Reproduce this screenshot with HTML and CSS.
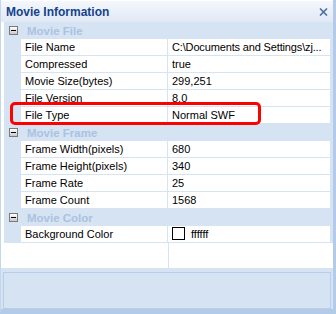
FILE: index.html
```html
<!DOCTYPE html>
<html lang="en">
  <head>
    <meta charset="UTF-8" />
    <title>Movie Information</title>
    <link rel="stylesheet" href="styles.css">
  </head>
  <body>
    <div class="window">
      <div class="titlebar">
        <span class="title">Movie Information</span>
        <svg class="close" width="9" height="8" viewBox="0 0 9 8">
          <path d="M1 0.5 L8 7.5 M8 0.5 L1 7.5" stroke="#4d6f9f" stroke-width="1.6" fill="none" />
        </svg>
      </div>

      <div class="grid">
        <div class="group"><span class="toggle"></span>Movie File</div>
        <div class="row"><div class="name">File Name</div><div class="value path" title="C:\Documents and Settings\zjh\My Documents\movie.swf">C:\Documents and Settings\zj...</div></div>
        <div class="row"><div class="name">Compressed</div><div class="value">true</div></div>
        <div class="row"><div class="name">Movie Size(bytes)</div><div class="value">299,251</div></div>
        <div class="row"><div class="name">File Version</div><div class="value">8.0</div></div>
        <div class="row"><div class="name">File Type</div><div class="value">Normal SWF</div></div>

        <div class="group"><span class="toggle"></span>Movie Frame</div>
        <div class="row"><div class="name">Frame Width(pixels)</div><div class="value">680</div></div>
        <div class="row"><div class="name">Frame Height(pixels)</div><div class="value">340</div></div>
        <div class="row"><div class="name">Frame Rate</div><div class="value">25</div></div>
        <div class="row"><div class="name">Frame Count</div><div class="value">1568</div></div>

        <div class="group"><span class="toggle"></span>Movie Color</div>
        <div class="row">
          <div class="name">Background Color</div>
          <div class="value"><span class="swatch"></span>ffffff</div>
        </div>

        <div class="filler"><div class="name"></div><div class="value"></div></div>

        <!-- highlight around the File Type row -->
        <div class="highlight"></div>
      </div>

      <div class="desc">
        <div class="desc-inner"></div>
      </div>
    </div>
  </body>
</html>
```
FILE: styles.css
```css
* {
  margin: 0;
  padding: 0;
  box-sizing: border-box;
}

body {
  background: #ffffff;
  font-family: 'Liberation Sans', Arial, sans-serif;
  font-size: 11px;
  color: #000000;
}

.window {
  width: 336px;
  height: 314px;
  display: flex;
  flex-direction: column;
  background: #ffffff;
  border-right: 3px solid #b3cbe9;
  border-bottom: 5px solid #b3cbe9;
  border-left: 1px solid #c4d6ee;
}

.titlebar {
  height: 22px;
  display: flex;
  align-items: center;
  justify-content: space-between;
  padding: 0 5px 0 5px;
  background: linear-gradient(#f4f7fc, #e1e9f5);
  border-top: 1px solid #ffffff;
}

.title {
  font-weight: bold;
  font-size: 12px;
  color: #15428b;
}

.close {
  display: block;
  margin-top: 1px;
}

.grid {
  position: relative;
  display: flex;
  flex-direction: column;
  height: 246px;
  margin-left: 3px;
  background: #d5e3f3;
}

.group {
  height: 17px;
  display: flex;
  align-items: center;
  padding-left: 5px;
  font-weight: bold;
  font-size: 11.5px;
  color: #abc2e0;
}

.toggle {
  position: relative;
  width: 9px;
  height: 9px;
  margin-right: 9px;
  border: 1px solid #7a7a7a;
  background: linear-gradient(#ffffff, #c8c8c8);
}

.toggle::after {
  content: "";
  position: absolute;
  left: 1px;
  top: 3px;
  width: 5px;
  height: 1px;
  background: #000000;
}

.row,
.filler {
  display: grid;
  grid-template-columns: 147px 1fr;
  height: 17px;
  margin-left: 17px;
}

.name,
.value {
  background: #ffffff;
  border-bottom: 1px solid #d5e3f3;
  padding-left: 4px;
  line-height: 16px;
  white-space: nowrap;
  overflow: hidden;
}

.name {
  border-right: 1px solid #d5e3f3;
}

.value {
  text-overflow: ellipsis;
  margin-right: 3px;
}

.path {
  letter-spacing: -0.15px;
}

.filler {
  height: 25px;
  margin-left: 0;
  grid-template-columns: 165px 1fr;
}

.filler .name,
.filler .value {
  border-bottom: none;
}

.filler .value {
  margin-right: 0;
}

.swatch {
  display: inline-block;
  vertical-align: top;
  width: 13px;
  height: 13px;
  margin-top: 1px;
  border: 1px solid #000000;
  background: #ffffff;
  margin-right: 6px;
}

.highlight {
  position: absolute;
  left: 6px;
  top: 80px;
  width: 251px;
  height: 23px;
  border: 3px solid #ff0000;
  border-radius: 5px;
}

.desc {
  flex: 1;
  padding: 4px 2px 0 2px;
  background: #d5e3f3;
}

.desc-inner {
  height: 100%;
  border: 1px solid #b7cde8;
  background: #d5e3f3;
}
```
